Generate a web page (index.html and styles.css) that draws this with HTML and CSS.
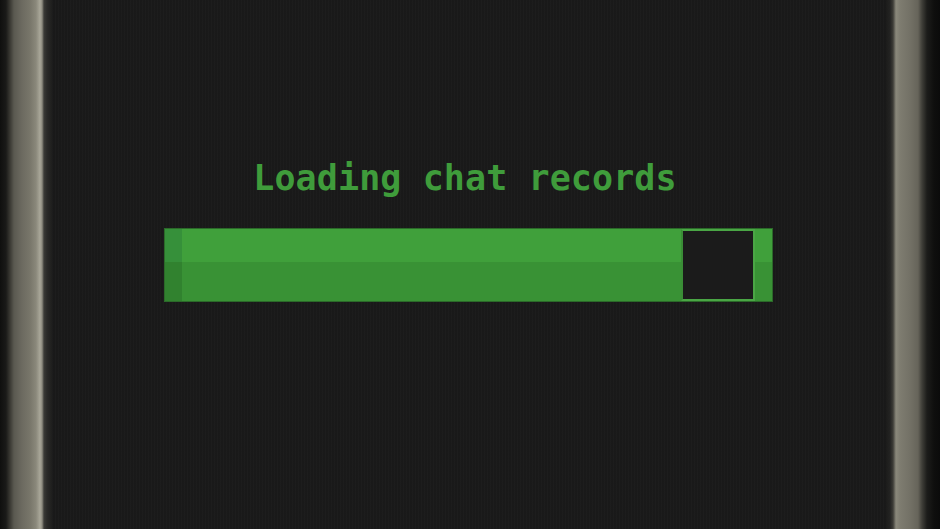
FILE: index.html
```html
<!DOCTYPE html>
<html lang="en">
<head>
<meta charset="utf-8">
<title>Loading</title>
<link rel="stylesheet" href="styles.css">
</head>
<body>
  <div class="monitor">
    <div class="bezel bezel-left"></div>
    <main class="screen">
      <div class="loader">
        <p class="loader-label">Loading chat records</p>
        <div class="progress">
          <div class="cell cell-first"></div>
          <div class="cell cell-fill"></div>
          <div class="cell cell-cursor"></div>
          <div class="cell cell-last"></div>
        </div>
      </div>
    </main>
    <div class="bezel bezel-right"></div>
  </div>
</body>
</html>
```
FILE: styles.css
```css
html, body {
  margin: 0;
  padding: 0;
  height: 100%;
  background: #0d0d0c;
}

.monitor {
  display: flex;
  height: 529px;
  width: 940px;
  overflow: hidden;
}

.bezel {
  flex: none;
}

.bezel-left {
  width: 52px;
  background: linear-gradient(90deg,
    #0f0f0e 0px, #1a1a18 6px, #3a3933 10px, #5a5950 14px,
    #6c6a60 22px, #78766a 30px, #8a887b 36px, #a9a799 40px,
    #8e8c80 42px, #3a3a36 44px, #2a2a28 47px, #1e1e1d 52px);
}

.bezel-right {
  width: 54px;
  background: linear-gradient(90deg,
    #1c1c1b 0px, #232322 4px, #3d3c37 7px, #8a887b 10px,
    #7e7c70 14px, #737166 24px, #66645a 32px, #3f3e38 36px,
    #1c1c1a 41px, #0f0f0e 48px, #0b0b0b 54px);
}

.screen {
  flex: 1;
  display: flex;
  justify-content: center;
  background-color: #1a1a1a;
  background-image: repeating-linear-gradient(90deg,
    rgba(255,255,255,0.01) 0px, rgba(255,255,255,0.01) 1px,
    rgba(0,0,0,0.03) 1px, rgba(0,0,0,0.03) 3px);
}

.loader {
  display: flex;
  flex-direction: column;
  align-items: center;
  padding-top: 156px;
}

.loader-label {
  margin: 0 0 0 -8px;
  font-family: "DejaVu Sans Mono", "Liberation Mono", monospace;
  font-size: 35px;
  font-weight: bold;
  line-height: 44px;
  color: #3f9c3b;
  letter-spacing: 0.1px;
}

.progress {
  margin-top: 28px;
  margin-left: -1px;
  display: flex;
  width: 609px;
  height: 74px;
  box-sizing: border-box;
  border: 1px solid #2b6a29;
  background: #2b6a29;
}

.cell {
  height: 100%;
}

.cell-first {
  width: 17px;
  background: linear-gradient(180deg, #36903a 0, #36903a 46%, #31822f 46%, #31822f 100%);
}

.cell-fill {
  flex: 1;
  background: linear-gradient(180deg, #40a03b 0, #40a03b 46%, #399235 46%, #399235 100%);
}

.cell-cursor {
  width: 74px;
  box-sizing: border-box;
  border: 2px solid #4aa645;
  border-left-color: #3a8d36;
  background: #1b1b1b;
}

.cell-last {
  width: 17px;
  background: linear-gradient(180deg, #40a03b 0, #40a03b 46%, #399235 46%, #399235 100%);
}
```
